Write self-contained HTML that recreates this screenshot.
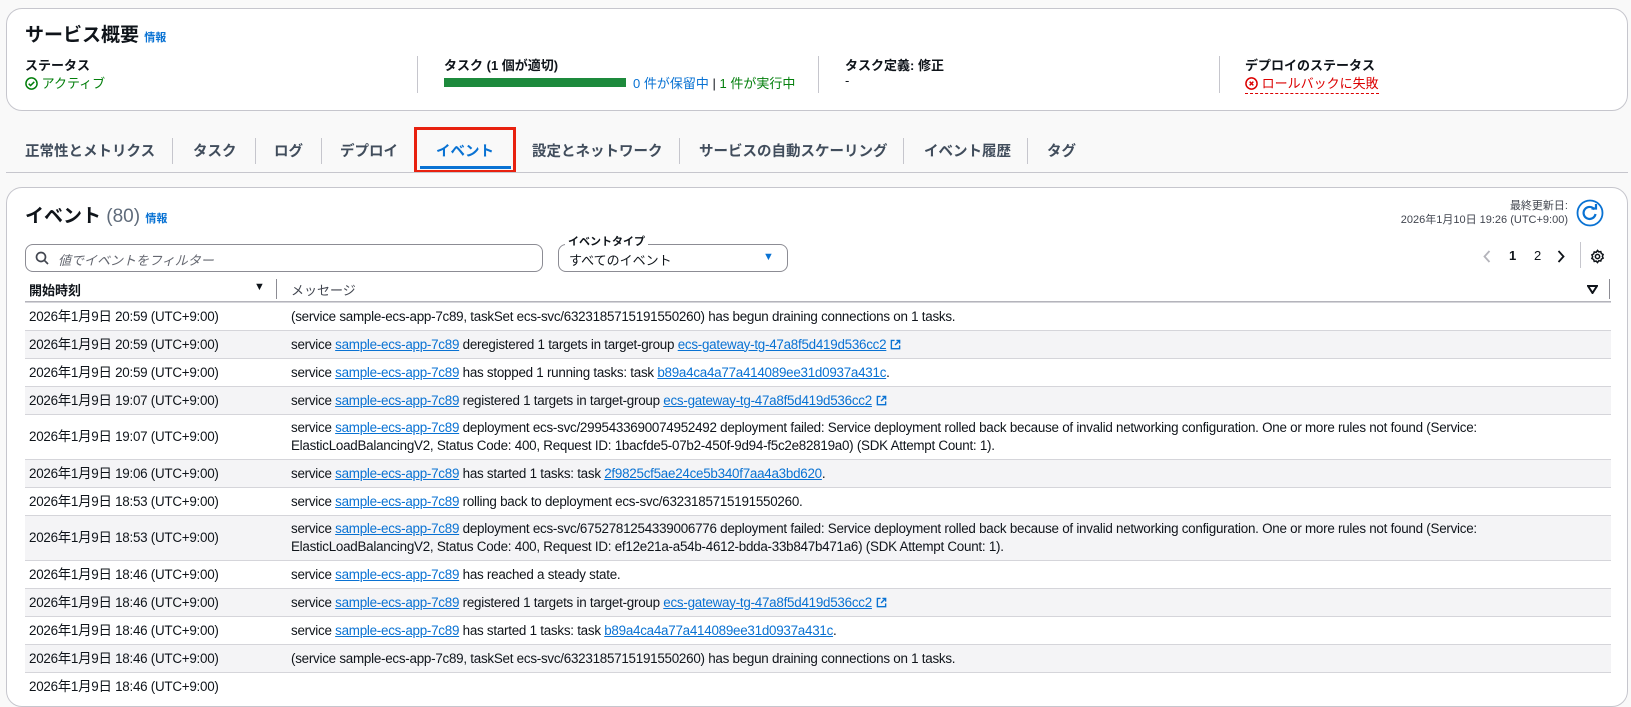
<!DOCTYPE html>
<html><head><meta charset="utf-8">
<style>
*{box-sizing:border-box;margin:0;padding:0}
body{width:1631px;height:679px;overflow:hidden;background:#f9f9f9;font-family:"Liberation Sans","Noto Sans CJK JP",sans-serif;color:#0f141a;position:relative;font-size:14px}
.abs{position:absolute;white-space:nowrap}
.card{position:absolute;background:#fff;border:1px solid #c6c6cd;border-radius:16px}
.b{font-weight:bold}
.info{color:#0972d3;font-size:11px;font-weight:bold}
.vd{position:absolute;width:1px;background:#c6c6cd}
a{color:#0972d3;text-decoration:underline}
.tab{position:absolute;top:140px;font-size:14.5px;font-weight:bold;color:#414d5c;white-space:nowrap}
.tsep{position:absolute;top:138px;height:26px;width:1px;background:#c6c6cd}
table{position:absolute;left:25px;top:302px;width:1586px;border-collapse:collapse;font-size:13.4px;letter-spacing:-0.25px}
td{border-top:1px solid #d5d5da;vertical-align:middle;white-space:nowrap;line-height:18px}
tr{height:28px}
tr.d{height:45px}
tr:nth-child(even) td{background:#f4f4f6}
td.t{width:266px;padding-left:4px}
.ext{display:inline-block;width:11px;height:11px;vertical-align:-1px;margin-left:4px}
</style></head><body>

<div class="card" style="left:6px;top:8px;width:1622px;height:103px"></div>
<div class="abs b" style="left:25px;top:20px;font-size:19px">サービス概要 <span class="info">情報</span></div>
<div class="abs b" style="left:25px;top:55px;font-size:13px">ステータス</div>
<div class="abs" style="left:25px;top:73px;font-size:13px;color:#037f0c"><svg width="13" height="13" viewBox="0 0 14 14" style="vertical-align:-2px"><circle cx="7" cy="7" r="6" fill="none" stroke="#037f0c" stroke-width="1.6"/><path d="M4 7.2l2 2 4-4" fill="none" stroke="#037f0c" stroke-width="1.6"/></svg> アクティブ</div>
<div class="vd" style="left:417px;top:56px;height:37px"></div>
<div class="abs b" style="left:444px;top:55px;font-size:13px">タスク (1 個が適切)</div>
<div class="abs" style="left:444px;top:78px;width:182px;height:9px;background:#1d8a3c"></div>
<div class="abs" style="left:633px;top:73px;font-size:13px;color:#0972d3">0 件が保留中 <span style="color:#0f141a">|</span> <span style="color:#037f0c">1 件が実行中</span></div>
<div class="vd" style="left:818px;top:56px;height:37px"></div>
<div class="abs b" style="left:845px;top:55px;font-size:13px">タスク定義: 修正</div>
<div class="abs" style="left:845px;top:73px;font-size:13px">-</div>
<div class="vd" style="left:1219px;top:56px;height:37px"></div>
<div class="abs b" style="left:1245px;top:55px;font-size:13px">デプロイのステータス</div>
<div class="abs" style="left:1245px;top:73px;font-size:13px;color:#db0000;border-bottom:1px dashed #db0000;padding-bottom:1px"><svg width="13" height="13" viewBox="0 0 14 14" style="vertical-align:-2px"><circle cx="7" cy="7" r="6" fill="none" stroke="#db0000" stroke-width="1.6"/><path d="M5 5l4 4M9 5l-4 4" stroke="#db0000" stroke-width="1.6"/></svg> ロールバックに失敗</div>

<div class="tab" style="left:25px">正常性とメトリクス</div><div class="tsep" style="left:172px"></div>
<div class="tab" style="left:193px">タスク</div><div class="tsep" style="left:255px"></div>
<div class="tab" style="left:274px">ログ</div><div class="tsep" style="left:321px"></div>
<div class="tab" style="left:340px">デプロイ</div>
<div class="tab" style="left:436px;color:#0972d3">イベント</div>
<div class="abs" style="left:420px;top:166px;width:91px;height:3px;background:#0972d3"></div>
<div class="abs" style="left:414px;top:127px;width:102px;height:46px;border:3px solid #e8210f"></div>
<div class="tab" style="left:532px">設定とネットワーク</div><div class="tsep" style="left:679px"></div>
<div class="tab" style="left:699px">サービスの自動スケーリング</div><div class="tsep" style="left:903px"></div>
<div class="tab" style="left:924px">イベント履歴</div><div class="tsep" style="left:1027px"></div>
<div class="tab" style="left:1047px">タグ</div>
<div class="abs" style="left:6px;top:172px;width:1622px;height:1px;background:#c6c6cd"></div>

<div class="card" style="left:6px;top:187px;width:1622px;height:520px"></div>
<div class="abs b" style="left:25px;top:201px;font-size:19px">イベント <span style="font-weight:normal;color:#5f6b7a">(80)</span> <span class="info">情報</span></div>
<div class="abs" style="right:63px;top:199px;font-size:11px;color:#424650;text-align:right;line-height:14px">最終更新日:<br>2026年1月10日 19:26 (UTC+9:00)</div>
<svg class="abs" style="left:1576px;top:199px" width="28" height="28" viewBox="0 0 28 28"><circle cx="14" cy="14" r="12.5" fill="#fff" stroke="#0972d3" stroke-width="1.8"/><path d="M18.5 10.5A6 6 0 1 0 19.5 15" fill="none" stroke="#0972d3" stroke-width="2.2"/><path d="M15.5 9.5h4.5V5" fill="none" stroke="#0972d3" stroke-width="2.2"/></svg>

<div class="abs" style="left:25px;top:244px;width:518px;height:28px;border:1px solid #8c8c94;border-radius:8px"></div>
<svg class="abs" style="left:35px;top:251px" width="14" height="14" viewBox="0 0 14 14"><circle cx="6" cy="6" r="4.5" fill="none" stroke="#424650" stroke-width="1.7"/><path d="M9.3 9.3L13 13" stroke="#424650" stroke-width="1.7"/></svg>
<div class="abs" style="left:58px;top:250px;font-size:13px;color:#656871;font-style:italic">値でイベントをフィルター</div>
<div class="abs" style="left:558px;top:244px;width:230px;height:28px;border:1px solid #8c8c94;border-radius:8px"></div>
<div class="abs b" style="left:565px;top:233px;font-size:11px;background:#fff;padding:0 3px">イベントタイプ</div>
<div class="abs" style="left:569px;top:250px;font-size:13px">すべてのイベント</div>
<div class="abs" style="left:763px;top:251px;font-size:11px;color:#0972d3">▼</div>

<svg class="abs" style="left:1483px;top:250px" width="8" height="13" viewBox="0 0 8 13"><path d="M6.5 1L1.5 6.5 6.5 12" fill="none" stroke="#b4b4bb" stroke-width="1.8"/></svg>
<div class="abs b" style="left:1509px;top:248px;font-size:13px">1</div>
<div class="abs" style="left:1534px;top:248px;font-size:13px">2</div>
<svg class="abs" style="left:1557px;top:250px" width="8" height="13" viewBox="0 0 8 13"><path d="M1.5 1L6.5 6.5 1.5 12" fill="none" stroke="#0f141a" stroke-width="1.8"/></svg>
<div class="vd" style="left:1580px;top:242px;height:26px"></div>
<svg class="abs" style="left:1590px;top:249px" width="15" height="15" viewBox="0 0 16 16"><path d="M8 1.5l1.4 1.6 2.1-.3.6 2 1.9 1-.8 2 .8 2-1.9 1-.6 2-2.1-.3L8 14.5l-1.4-1.6-2.1.3-.6-2-1.9-1 .8-2-.8-2 1.9-1 .6-2 2.1.3z" fill="none" stroke="#0f141a" stroke-width="1.6"/><circle cx="8" cy="8" r="2.3" fill="none" stroke="#0f141a" stroke-width="1.6"/></svg>

<div class="abs b" style="left:29px;top:280px;font-size:13px">開始時刻</div>
<div class="abs" style="left:254px;top:281px;font-size:11px">▼</div>
<div class="vd" style="left:276px;top:279px;height:20px;background:#8c8c94"></div>
<div class="abs" style="left:291px;top:280px;font-size:13px;color:#424650">メッセージ</div>
<svg class="abs" style="left:1587px;top:285px" width="11" height="9" viewBox="0 0 11 9"><path d="M1 1h9L5.5 8z" fill="none" stroke="#0f141a" stroke-width="2"/></svg>
<div class="vd" style="left:1609px;top:279px;height:20px;background:#8c8c94"></div>
<div class="abs" style="left:25px;top:301px;width:1586px;height:2px;background:#b4b4bb"></div>

<table>
<tr><td class="t">2026年1月9日 20:59 (UTC+9:00)</td><td>(service sample-ecs-app-7c89, taskSet ecs-svc/6323185715191550260) has begun draining connections on 1 tasks.</td></tr>
<tr><td class="t">2026年1月9日 20:59 (UTC+9:00)</td><td>service <a>sample-ecs-app-7c89</a> deregistered 1 targets in target-group <a>ecs-gateway-tg-47a8f5d419d536cc2<svg class="ext" viewBox="0 0 12 12"><path d="M5 1.5H1.5v9h9V7M7 1.5h3.5V5M10.5 1.5L5.5 6.5" fill="none" stroke="#0972d3" stroke-width="1.5"/></svg></a></td></tr>
<tr><td class="t">2026年1月9日 20:59 (UTC+9:00)</td><td>service <a>sample-ecs-app-7c89</a> has stopped 1 running tasks: task <a>b89a4ca4a77a414089ee31d0937a431c</a>.</td></tr>
<tr><td class="t">2026年1月9日 19:07 (UTC+9:00)</td><td>service <a>sample-ecs-app-7c89</a> registered 1 targets in target-group <a>ecs-gateway-tg-47a8f5d419d536cc2<svg class="ext" viewBox="0 0 12 12"><path d="M5 1.5H1.5v9h9V7M7 1.5h3.5V5M10.5 1.5L5.5 6.5" fill="none" stroke="#0972d3" stroke-width="1.5"/></svg></a></td></tr>
<tr class="d"><td class="t">2026年1月9日 19:07 (UTC+9:00)</td><td>service <a>sample-ecs-app-7c89</a> deployment ecs-svc/2995433690074952492 deployment failed: Service deployment rolled back because of invalid networking configuration. One or more rules not found (Service:<br>ElasticLoadBalancingV2, Status Code: 400, Request ID: 1bacfde5-07b2-450f-9d94-f5c2e82819a0) (SDK Attempt Count: 1).</td></tr>
<tr><td class="t">2026年1月9日 19:06 (UTC+9:00)</td><td>service <a>sample-ecs-app-7c89</a> has started 1 tasks: task <a>2f9825cf5ae24ce5b340f7aa4a3bd620</a>.</td></tr>
<tr><td class="t">2026年1月9日 18:53 (UTC+9:00)</td><td>service <a>sample-ecs-app-7c89</a> rolling back to deployment ecs-svc/6323185715191550260.</td></tr>
<tr class="d"><td class="t">2026年1月9日 18:53 (UTC+9:00)</td><td>service <a>sample-ecs-app-7c89</a> deployment ecs-svc/6752781254339006776 deployment failed: Service deployment rolled back because of invalid networking configuration. One or more rules not found (Service:<br>ElasticLoadBalancingV2, Status Code: 400, Request ID: ef12e21a-a54b-4612-bdda-33b847b471a6) (SDK Attempt Count: 1).</td></tr>
<tr><td class="t">2026年1月9日 18:46 (UTC+9:00)</td><td>service <a>sample-ecs-app-7c89</a> has reached a steady state.</td></tr>
<tr><td class="t">2026年1月9日 18:46 (UTC+9:00)</td><td>service <a>sample-ecs-app-7c89</a> registered 1 targets in target-group <a>ecs-gateway-tg-47a8f5d419d536cc2<svg class="ext" viewBox="0 0 12 12"><path d="M5 1.5H1.5v9h9V7M7 1.5h3.5V5M10.5 1.5L5.5 6.5" fill="none" stroke="#0972d3" stroke-width="1.5"/></svg></a></td></tr>
<tr><td class="t">2026年1月9日 18:46 (UTC+9:00)</td><td>service <a>sample-ecs-app-7c89</a> has started 1 tasks: task <a>b89a4ca4a77a414089ee31d0937a431c</a>.</td></tr>
<tr><td class="t">2026年1月9日 18:46 (UTC+9:00)</td><td>(service sample-ecs-app-7c89, taskSet ecs-svc/6323185715191550260) has begun draining connections on 1 tasks.</td></tr>
<tr><td class="t">2026年1月9日 18:46 (UTC+9:00)</td><td></td></tr>
</table>
</body></html>
